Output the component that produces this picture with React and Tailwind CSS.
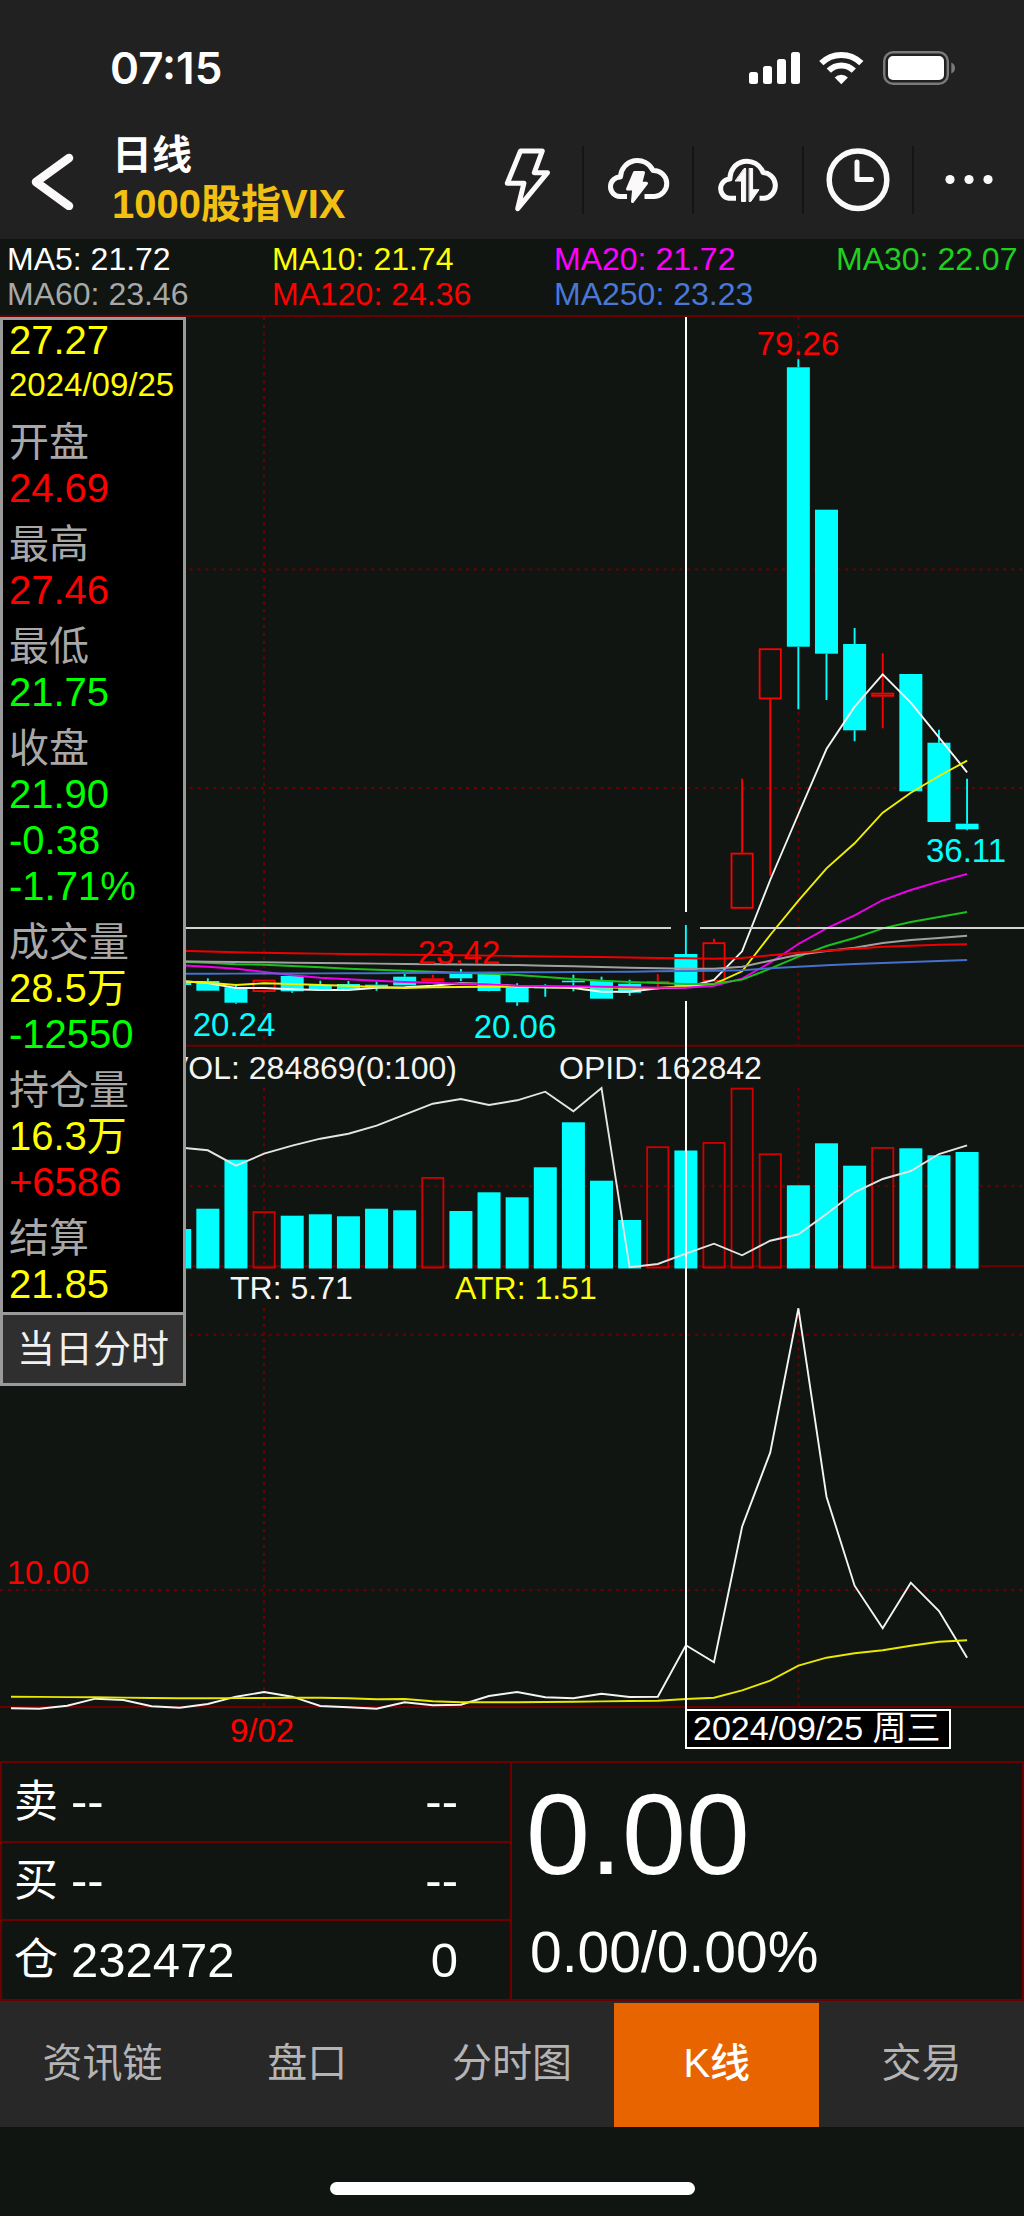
import { useState } from 'react'

const STEP = 28.12
const X0 = 11
const BAR_W = 23
const x = (i) => X0 + STEP * i

const CYAN = '#00ffff'
const RED = '#ff0000'
const GRID = '#6c0000'

const averages = [
  { label: 'MA5: 21.72', className: 'text-white' },
  { label: 'MA10: 21.74', className: 'text-[#ffff00]' },
  { label: 'MA20: 21.72', className: 'text-[#ff00ff]' },
  { label: 'MA30: 22.07', className: 'text-[#1fd01f]' },
  { label: 'MA60: 23.46', className: 'text-[#a8a8a8]' },
  { label: 'MA120: 24.36', className: 'text-[#ff0000]' },
  { label: 'MA250: 23.23', className: 'text-[#4a78d8]' },
]

// [index, up, bodyTop, bodyBottom, high, low]
const candles = [
  [6, false, 981, 985, 981, 985],
  [7, false, 981, 990.7, 978.3, 990.7],
  [8, false, 987.3, 1002.7, 985, 1003.7],
  [9, true, 979.7, 992, 979.7, 992.7],
  [10, false, 976, 991.3, 975, 992.7],
  [11, false, 985, 989, 980.7, 989],
  [12, false, 984, 989, 981, 989],
  [13, false, 984.7, 987.3, 981.7, 990.7],
  [14, false, 976.7, 985.3, 974, 985.3],
  [15, true, 978.3, 981.3, 974.7, 981.3],
  [16, false, 973.7, 978.3, 969, 981],
  [17, false, 973.7, 991, 973.7, 991.3],
  [18, false, 987.3, 1002.3, 983.3, 1005.7],
  [19, false, 986.7, 988.3, 984.3, 996.7],
  [20, false, 980.7, 982.3, 974.7, 991.3],
  [21, false, 980.7, 998.7, 976.7, 998.7],
  [22, false, 983.7, 992.7, 979.7, 995.7],
  [23, true, 981, 982, 974, 990],
  [24, false, 954, 986.7, 925, 986.7],
  [25, true, 942.3, 981.7, 938.7, 981.7],
  [26, true, 852.7, 908.7, 778.7, 908.7],
  [27, true, 648.3, 699.3, 648.3, 875.7],
  [28, false, 367.3, 646.7, 359.3, 709.3],
  [29, false, 509.7, 653.7, 509.7, 700],
  [30, false, 644, 730.3, 628, 741.3],
  [31, true, 692.7, 696.7, 653.3, 728.3],
  [32, false, 674, 791.3, 674, 791.3],
  [33, false, 742.7, 822, 729.7, 822],
  [34, false, 823.7, 829.3, 778.7, 830.3],
]

// bar tops, first entry belongs to index 6
const volumes = [
  1229, 1208.7, 1159.7, 1211.3, 1215.7, 1214.3, 1216.3, 1208.7, 1210.3, 1177, 1211, 1192.3, 1197.3, 1167.3, 1122.3,
  1180.7, 1220, 1146.3, 1150.5, 1142, 1087.7, 1153.3, 1185.3, 1143.3, 1165.7, 1147, 1148.3, 1155.3, 1152,
]

const ma5 = [
  981, 983, 988, 988, 989.3, 990, 990, 987.7, 987.3, 985.7, 983.3, 984, 986, 987.3, 988, 991.7, 991.7, 988.3, 987.3,
  980, 951.3, 880, 814, 749, 706.7, 674.3, 702.7, 737.3, 772.3,
]
const ma10 = [
  981.3, 982.7, 985, 983.3, 984, 985, 985.7, 987.3, 988, 987.3, 987, 986.7, 987, 987.3, 987.3, 987.3, 988, 988, 986,
  984, 971.3, 935, 900.7, 868.3, 843.3, 812.7, 792.7, 776, 760.7,
]
const ma20 = [
  965.3, 966.7, 968.7, 972, 975.3, 977.7, 979.3, 980.7, 982, 982.7, 983.7, 984.3, 985.7, 986, 986.3, 986.7, 987.3,
  987.7, 987.7, 985.7, 978.7, 962.7, 944, 928.3, 915.3, 900, 890, 881.7, 874,
]
const ma30 = [
  961.7, 962.7, 964.3, 964.7, 966, 967.3, 968.7, 969.7, 970.7, 971.7, 972.7, 973.7, 975, 977, 979, 980.7, 982, 983,
  984, 983.7, 979.7, 968.7, 956.7, 946, 938, 928.3, 922, 917, 912,
]
const ma60 = [
  961.3, 961.7, 962, 962.3, 962.7, 963, 963.3, 963.6, 964, 964.3, 964.5, 964.8, 965, 965.7, 966.3, 967, 967.7, 968.3,
  968.7, 968.7, 966.7, 960.7, 954.7, 951, 947.7, 943, 940, 938, 935.7,
]
const ma120 = [
  950.7, 951.5, 952.3, 952.8, 953.2, 953.6, 954, 954.3, 954.7, 955, 955.3, 955.6, 956, 956.4, 956.7, 957, 957.5, 958,
  958.3, 958.7, 958, 955.3, 952.7, 950.7, 948.7, 946.7, 945.7, 944.7, 944.3,
]
const ma250 = [
  973.7, 973.7, 973.6, 973.5, 973.5, 973.4, 973.3, 973.2, 973, 972.9, 972.7, 972.5, 972.3, 972.2, 972, 971.9, 971.7,
  971.3, 971, 970.8, 970.3, 968.3, 966.7, 965.3, 964, 963, 962, 961, 960,
]
const openInterest = [
  1147.5, 1150.3, 1165.7, 1153.7, 1145.7, 1138.7, 1133.7, 1125.7, 1114.7, 1103.7, 1099, 1105, 1100.3, 1091.7, 1111.3,
  1088, 1267.3, 1264, 1253.7, 1243.7, 1255.3, 1240.7, 1234.3, 1214, 1192.3, 1179, 1171, 1154, 1145.3,
]
const trueRange = [
  1708.3, 1708.7, 1705.7, 1698.7, 1700, 1706.3, 1707.7, 1704, 1696.7, 1692, 1696.7, 1706, 1707.3, 1708.7, 1702.3,
  1705.3, 1704.7, 1696, 1692, 1697.3, 1698.3, 1693.7, 1697, 1696.7, 1645.3, 1662.3, 1526.7, 1452.7, 1308.3, 1496.7,
  1585.7, 1628.3, 1582.7, 1611, 1657.7,
]
const averageRange = [
  1696.7, 1696.9, 1697.1, 1697.3, 1697.6, 1698, 1698.3, 1698.2, 1698.1, 1698, 1697.8, 1697.7, 1698.3, 1699.3, 1699,
  1701.3, 1702.3, 1702.3, 1702.2, 1702, 1701.7, 1701.4, 1701, 1700.7, 1699, 1697.7, 1690.3, 1680.7, 1665.7, 1657.7,
  1653.3, 1650.3, 1645.7, 1641.7, 1640.3,
]

const dayRows = [
  { label: '开盘', values: [['24.69', 'text-[#ff0000]']] },
  { label: '最高', values: [['27.46', 'text-[#ff0000]']] },
  { label: '最低', values: [['21.75', 'text-[#00ff00]']] },
  {
    label: '收盘',
    values: [
      ['21.90', 'text-[#00ff00]'],
      ['-0.38', 'text-[#00ff00]'],
      ['-1.71%', 'text-[#00ff00]'],
    ],
  },
  {
    label: '成交量',
    values: [
      ['28.5万', 'text-[#ffff00]'],
      ['-12550', 'text-[#00ff00]'],
    ],
  },
  {
    label: '持仓量',
    values: [
      ['16.3万', 'text-[#ffff00]'],
      ['+6586', 'text-[#ff0000]'],
    ],
  },
  { label: '结算', values: [['21.85', 'text-[#ffff00]']] },
]

const quoteRows = [
  ['卖', '--', '--'],
  ['买', '--', '--'],
  ['仓', '232472', '0'],
]

const tabs = ['资讯链', '盘口', '分时图', 'K线', '交易']

export default function App() {
  return (
    <div className="bg-[#101511] font-['Liberation_Sans','Noto_Sans_CJK_SC',sans-serif] text-white">
      <StatusBar />
      <Header />
      <Averages />
      <main className="relative">
        <Chart />
        <DayPanel />
      </main>
      <Quote />
      <TabBar />
      <div className="flex h-[89px] justify-center pt-[55px]">
        <div className="h-[13px] w-[365px] rounded-full bg-white" />
      </div>
    </div>
  )
}

function StatusBar() {
  return (
    <div className="flex h-[120px] items-center justify-between bg-[#212121] pl-[110px] pr-[69px] pt-4">
      <span className="font-['Inter','Liberation_Sans',sans-serif] text-[44px] font-semibold leading-none">07:15</span>
      <div className="flex gap-[19px]">
        <svg width="51" height="34" viewBox="0 0 51 34" fill="#fff" aria-hidden="true">
          <rect x="0" y="21" width="9" height="12" rx="2.5" />
          <rect x="14" y="15" width="9" height="18" rx="2.5" />
          <rect x="28" y="8" width="9" height="25" rx="2.5" />
          <rect x="42" y="1" width="9" height="32" rx="2.5" />
        </svg>
        <svg width="45" height="34" viewBox="0 0 45 34" fill="none" stroke="#fff" strokeWidth="6" aria-hidden="true">
          <path d="M2.3 12.2A28.3 28.3 0 0 1 42.3 12.2" />
          <path d="M9.8 19.7A17.7 17.7 0 0 1 34.8 19.7" />
          <path d="M22.3 33.2L15.7 26.5A9.3 9.3 0 0 1 28.9 26.5Z" fill="#fff" stroke="none" />
        </svg>
        <svg width="72" height="34" viewBox="0 0 72 34" aria-hidden="true">
          <rect x="1.2" y="1.2" width="63.6" height="31.6" rx="9" fill="none" stroke="#7a7a7a" strokeWidth="2.4" />
          <rect x="5" y="5" width="56" height="24" rx="5" fill="#fff" />
          <path d="M68.3 11.5Q72 13 72 17Q72 21 68.3 22.5Z" fill="#7a7a7a" />
        </svg>
      </div>
    </div>
  )
}

function Header() {
  return (
    <header className="flex h-[119px] items-center bg-[#212121]">
      <button type="button" aria-label="返回" className="flex h-full w-[112px] shrink-0 items-center pl-[30px]">
        <svg width="46" height="60" viewBox="0 0 46 60" fill="none" stroke="#fbf9fa" strokeWidth="8.5" strokeLinejoin="round" strokeLinecap="round" aria-hidden="true">
          <path d="M39 8L6 32L39 56" />
        </svg>
      </button>
      <h1 className="flex-1 text-[40px] font-bold leading-[49px]">
        <span className="block">日线</span>
        <span className="block text-[#f2c012]">1000股指VIX</span>
      </h1>
      <div className="flex h-[68px] divide-x-2 divide-[#151515]">
        <IconButton label="闪电下单">
          <path d="M24.5 3H46.3L38.3 24.7H51.5L21.7 60.7L27.9 35.3H11.3Z" strokeWidth="5" />
        </IconButton>
        <IconButton label="云条件单">
          <path d="M21 48.5H14A9.7 9.7 0 0 1 14.5 29A17 17 0 0 1 47 22.5A13 13 0 0 1 48.5 48.5H38.5" strokeWidth="5" strokeLinecap="butt" />
          <path d="M28.5 24.5H37.5L34.7 35.3H40.5L26.5 53.5L27.7 41H21.5Z" fill="#fbf9fa" strokeWidth="3" />
        </IconButton>
        <IconButton label="云同步">
          <path d="M20 50.3H13A9.7 9.7 0 0 1 14 31A17 17 0 0 1 47 24.5A13 13 0 0 1 48.5 50.3H43.5" strokeWidth="5" strokeLinecap="butt" />
          <path d="M28.4 20.5H29.7V53.5H25.5V33H19.5Z" fill="#fbf9fa" strokeWidth="1" />
          <path d="M33.5 20.5H36.6V41.7H43L34.8 53.5H33.5Z" fill="#fbf9fa" strokeWidth="1" />
        </IconButton>
        <IconButton label="周期">
          <circle cx="32" cy="31.7" r="28.8" strokeWidth="5.5" />
          <path d="M31 14V31.5H45.5" strokeWidth="5" />
        </IconButton>
        <IconButton label="更多">
          <g fill="#fbf9fa" stroke="none">
            <circle cx="13" cy="31.5" r="4.6" />
            <circle cx="32" cy="31.5" r="4.6" />
            <circle cx="51" cy="31.5" r="4.6" />
          </g>
        </IconButton>
      </div>
    </header>
  )
}

function IconButton({ label, children }) {
  return (
    <button type="button" aria-label={label} className="flex w-[110px] items-center justify-center">
      <svg width="64" height="64" viewBox="0 0 64 64" fill="none" stroke="#fbf9fa" strokeLinejoin="round" strokeLinecap="round" aria-hidden="true">
        {children}
      </svg>
    </button>
  )
}

function Averages() {
  return (
    <ul className="grid grid-cols-[265fr_282fr_282fr_188fr] pb-[3px] pl-[7px] pt-[3px] text-[32px] leading-[35px]">
      {averages.map(({ label, className }) => (
        <li key={label} className={`whitespace-nowrap ${className}`}>
          {label}
        </li>
      ))}
    </ul>
  )
}

function Line({ data, start = 6, color }) {
  const points = data.map((y, i) => `${x(start + i).toFixed(1)},${y}`).join(' ')
  return <polyline points={points} fill="none" stroke={color} strokeWidth="1.9" />
}

function Bar({ index, up, top, bottom, color }) {
  const left = x(index) - BAR_W / 2
  if (up) {
    return (
      <rect x={left + 0.9} y={top + 0.9} width={BAR_W - 1.8} height={Math.max(bottom - top - 1.8, 0.4)} fill="none" stroke={color} strokeWidth="1.8" />
    )
  }
  return <rect x={left} y={top} width={BAR_W} height={bottom - top} fill={CYAN} />
}

function Chart() {
  return (
    <svg viewBox="0 315 1024 1446" className="block h-auto w-full" role="img" aria-label="K线图">
      <g stroke={GRID} strokeWidth="2">
        <path d="M0 316H1024M0 1045.7H1024M0 1266.3H1024M0 1707H1024" />
        <path d="M0 569.5H1024M0 788H1024M0 1186.3H1024M0 1334.7H1024M0 1590.3H1024" strokeDasharray="3 4.9" />
        <path d="M264 317V1045M264 1088V1266M264 1308V1707M798.4 317V1045M798.4 1088V1266M798.4 1308V1707" strokeDasharray="3 4.9" />
      </g>

      {candles.map(([i, up, top, bottom, high, low]) => (
        <g key={i}>
          <path d={`M${x(i)} ${high}V${top}M${x(i)} ${bottom}V${low}`} stroke={up ? RED : CYAN} strokeWidth="1.9" />
          <Bar index={i} up={up} top={top} bottom={bottom} color={RED} />
        </g>
      ))}
      <Line data={ma5} color="#f4f4f4" />
      <Line data={ma10} color="#f0f000" />
      <Line data={ma20} color="#ee00ee" />
      <Line data={ma30} color="#1cc01c" />
      <Line data={ma60} color="#a0a0a0" />
      <Line data={ma120} color="#ee0000" />
      <Line data={ma250} color="#4570cc" />

      {volumes.map((top, i) => (
        <Bar key={i} index={i + 6} up={candles[i][1]} top={top} bottom={1268.5} color="#d00000" />
      ))}
      <Line data={openInterest} color="#e4e4e4" />
      <Line data={trueRange} start={0} color="#f4f4f4" />
      <Line data={averageRange} start={0} color="#e8e800" />

      <g fontSize="33" textAnchor="middle">
        <text x="798" y="355" fill={RED}>79.26</text>
        <text x="459" y="964" fill={RED}>23.42</text>
        <text x="234" y="1036" fill={CYAN}>20.24</text>
        <text x="515" y="1038" fill={CYAN}>20.06</text>
        <text x="966" y="862" fill={CYAN}>36.11</text>
        <text x="48" y="1584" fill={RED}>10.00</text>
        <text x="262" y="1742" fill={RED}>9/02</text>
      </g>
      <g fontSize="32" fill="#f4f4f4">
        <text x="167" y="1079">VOL: 284869(0:100)</text>
        <text x="559" y="1079">OPID: 162842</text>
        <text x="230" y="1299">TR: 5.71</text>
        <text x="455" y="1299" fill="#ffff00">ATR: 1.51</text>
      </g>

      <path d="M686 317V912M686 1001V1710" stroke="#fff" strokeWidth="2" />
      <path d="M0 928H671M700 928H1024" stroke="#d2d6d2" strokeWidth="2" />
      <rect x="686" y="1710" width="264" height="38" fill="#000" stroke="#fff" strokeWidth="2" />
      <text x="693" y="1740" fontSize="34" fill="#fff">2024/09/25 周三</text>
    </svg>
  )
}

function DayPanel() {
  return (
    <aside className="absolute left-0 top-[2px] w-[186px] text-[40px] leading-[46px]">
      <div className="border-[3px] border-[#9a9a9a] bg-black pb-[5px] pl-[6px] text-[#a8a8a8]">
        <p className="leading-[41px] text-[#ffff00]">27.27</p>
        <p className="text-[33px] leading-[48px] text-[#ffff00]">2024/09/25</p>
        <dl>
          {dayRows.map(({ label, values }) => (
            <div key={label} className="pt-[10px]">
              <dt>{label}</dt>
              {values.map(([value, className]) => (
                <dd key={value} className={className}>
                  {value}
                </dd>
              ))}
            </div>
          ))}
        </dl>
      </div>
      <button type="button" className="block h-[71px] w-full border-[3px] border-t-0 border-[#9a9a9a] bg-[#2f2f2f] text-[38px] text-[#f0f0f0]">
        当日分时
      </button>
    </aside>
  )
}

function Quote() {
  return (
    <section className="grid grid-cols-2 border-2 border-[#6c0000]">
      <table className="w-full border-collapse border-r-2 border-[#6c0000] text-[49px] leading-none">
        <tbody className="divide-y-2 divide-[#6c0000]">
          {quoteRows.map(([label, price, amount]) => (
            <tr key={label} className="h-[78px]">
              <th scope="row" className="w-[69px] p-0 pl-3 text-left text-[44px] font-normal">
                {label}
              </th>
              <td className="p-0">{price}</td>
              <td className="p-0 pr-[52px] text-right">{amount}</td>
            </tr>
          ))}
        </tbody>
      </table>
      <div className="pl-[14px]">
        <p className="text-[115px] leading-[142px]">0.00</p>
        <p className="pl-1 text-[57px] leading-[94px]">0.00/0.00%</p>
      </div>
    </section>
  )
}

function TabBar() {
  const [active, setActive] = useState('K线')
  return (
    <nav className="grid grid-cols-5 bg-[#282828] pt-[2px] text-[40px]">
      {tabs.map((tab) => (
        <button
          key={tab}
          type="button"
          aria-current={tab === active ? 'page' : undefined}
          onClick={() => setActive(tab)}
          className={`h-[124px] pb-1 ${tab === active ? 'bg-[#e86400] font-medium text-white' : 'text-[#b4b4b4]'}`}
        >
          {tab}
        </button>
      ))}
    </nav>
  )
}
